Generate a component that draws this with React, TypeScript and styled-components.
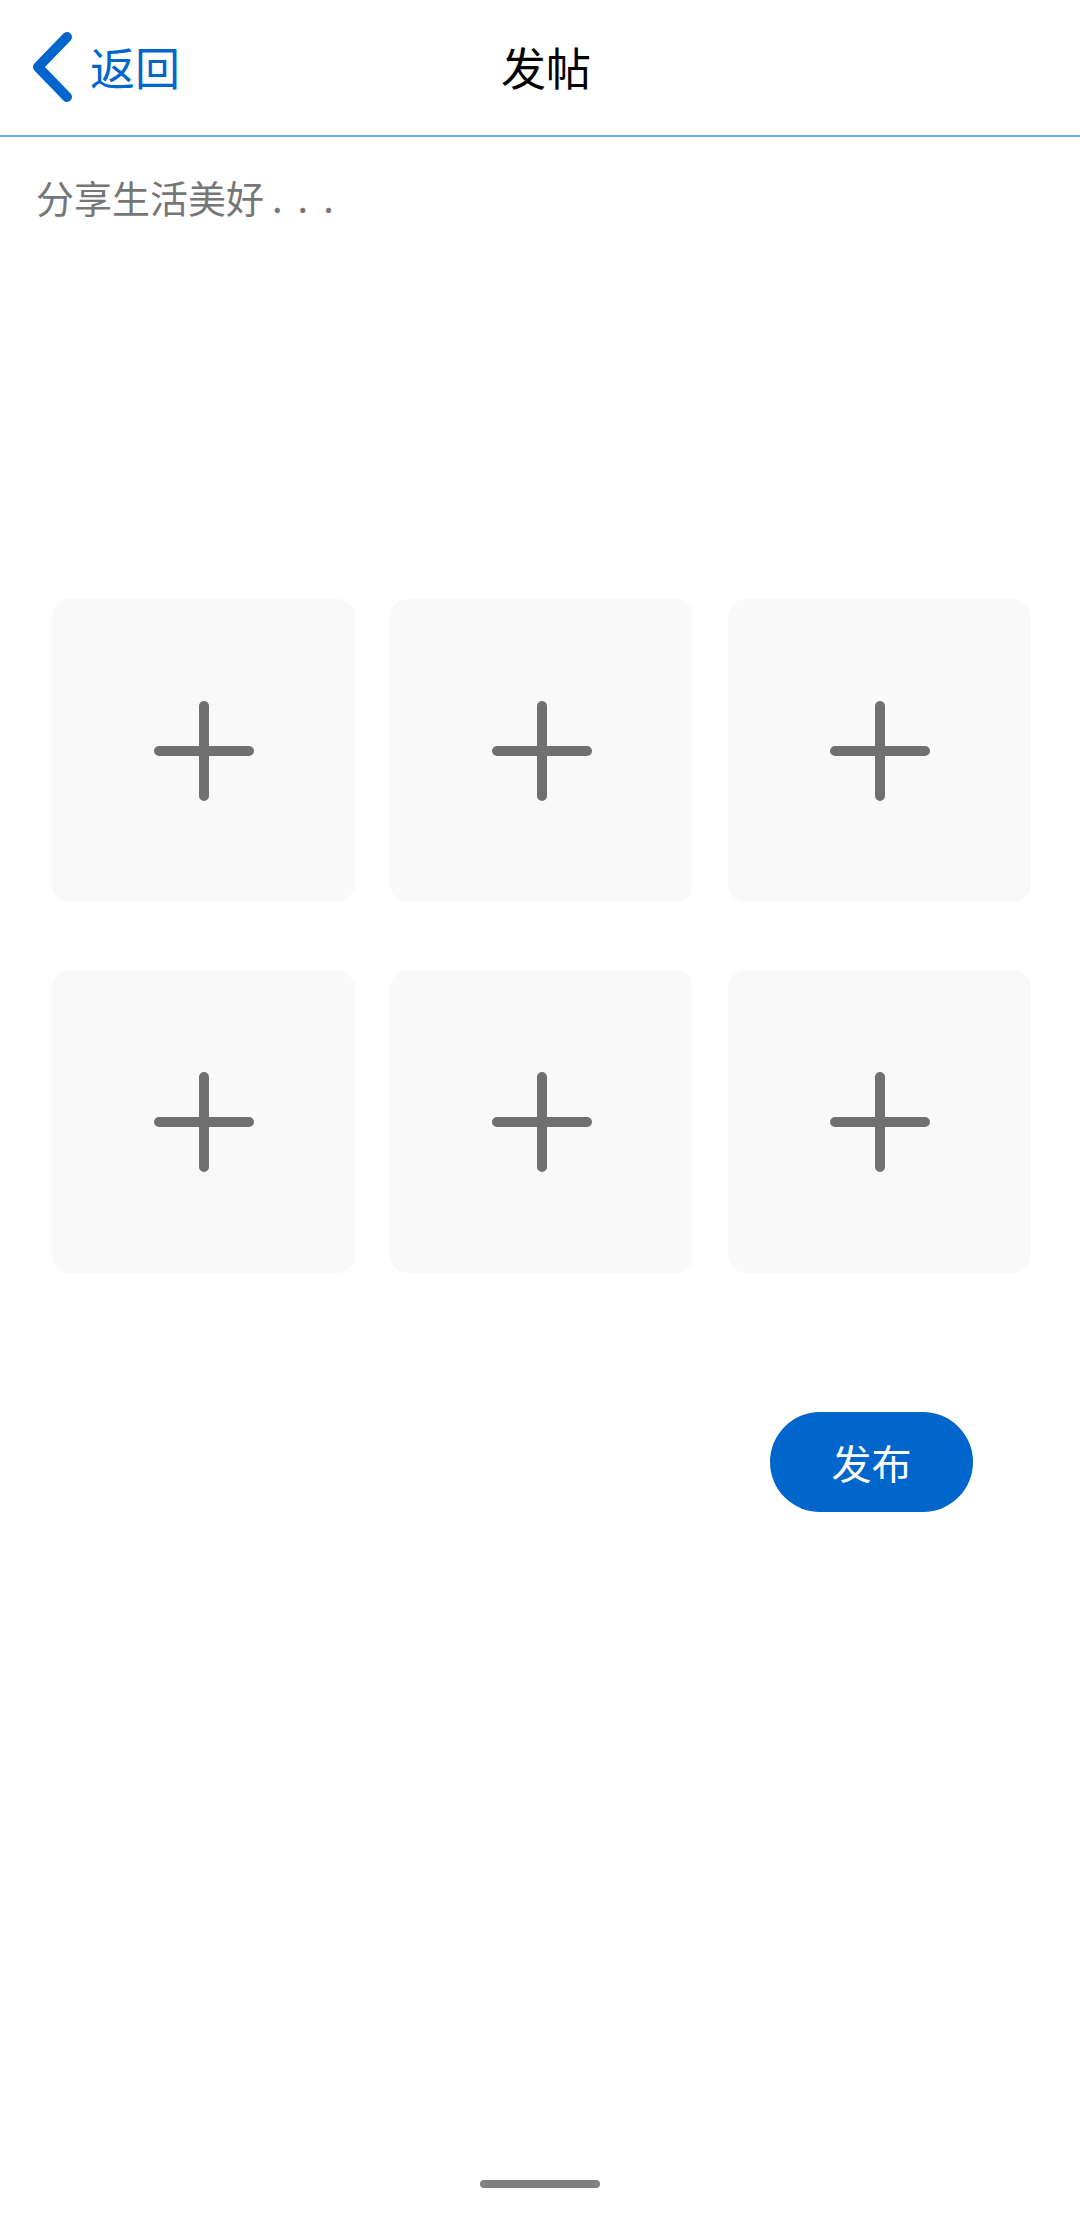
import styled, { createGlobalStyle } from "styled-components";

const GlobalStyle = createGlobalStyle`
	html, body {
		margin: 0;
		padding: 0;
		background: #ffffff;
	}
	body {
		font-family: "Noto Sans CJK SC", "Noto Sans", Roboto, sans-serif;
	}
	* {
		box-sizing: border-box;
	}
`;

const Page = styled.div`
	width: 1080px;
	height: 2232px;
	display: flex;
	flex-direction: column;
	background: #ffffff;
`;

const Header = styled.header`
	height: 137px;
	display: grid;
	grid-template-columns: 1fr auto 1fr;
	align-items: center;
	padding: 0 0 2px 32px;
	border-bottom: 2px solid #6aa9f5;
`;

const Back = styled.a`
	display: flex;
	align-items: center;
	gap: 14px;
	color: #0066cc;
	font-size: 45px;
	text-decoration: none;
	line-height: 1;
`;

const Title = styled.h1`
	margin: 0;
	padding-right: 20px;
	font-size: 45px;
	font-weight: 400;
	color: #000000;
	line-height: 1;
`;

const Editor = styled.div`
	height: 462px;
	padding: 37px 36px 0;
	font-size: 38px;
	line-height: 1.2;
	color: #767676;
`;

const Dots = styled.span`
	letter-spacing: 15px;
	margin-left: 8px;
`;

const Grid = styled.div`
	display: grid;
	grid-template-columns: repeat(3, 303px);
	column-gap: 35px;
	row-gap: 68px;
	padding: 0 50px 0 52px;
`;

const Slot = styled.button`
	width: 303px;
	height: 303px;
	border: none;
	border-radius: 18px;
	background: #f9f9f9;
	display: flex;
	align-items: center;
	justify-content: center;
	padding: 0;
`;

const Actions = styled.div`
	display: flex;
	justify-content: flex-end;
	padding: 139px 107px 0 0;
`;

const Publish = styled.button`
	width: 203px;
	height: 100px;
	border: none;
	border-radius: 50px;
	background: #0066cc;
	color: #ffffff;
	font-family: "Noto Sans CJK SC", sans-serif;
	font-size: 40px;
	padding: 0;
`;

const Spacer = styled.div`
	flex: 1;
`;

const HomeBar = styled.div`
	align-self: center;
	width: 120px;
	height: 8px;
	border-radius: 4px;
	background: #808080;
	margin-bottom: 44px;
`;

function Chevron() {
	return (
		<svg width="44" height="70" viewBox="0 0 44 70">
			<path
				d="M35 5 L6 35 L35 65"
				fill="none"
				stroke="#0066cc"
				strokeWidth="10"
				strokeLinecap="round"
				strokeLinejoin="round"
			/>
		</svg>
	);
}

function Plus() {
	return (
		<svg width="110" height="110" viewBox="0 0 110 110">
			<path
				d="M55 10 V100 M10 55 H100"
				stroke="#707070"
				strokeWidth="10"
				strokeLinecap="round"
			/>
		</svg>
	);
}

export default function App() {
	return (
		<Page>
			<GlobalStyle />
			<Header>
				<Back href="#">
					<Chevron />
					<span>返回</span>
				</Back>
				<Title>发帖</Title>
				<div />
			</Header>
			<Editor>
				分享生活美好<Dots>...</Dots>
			</Editor>
			<Grid>
				{Array.from({ length: 6 }).map((_, i) => (
					<Slot key={i}>
						<Plus />
					</Slot>
				))}
			</Grid>
			<Actions>
				<Publish>发布</Publish>
			</Actions>
			<Spacer />
			<HomeBar />
		</Page>
	);
}
